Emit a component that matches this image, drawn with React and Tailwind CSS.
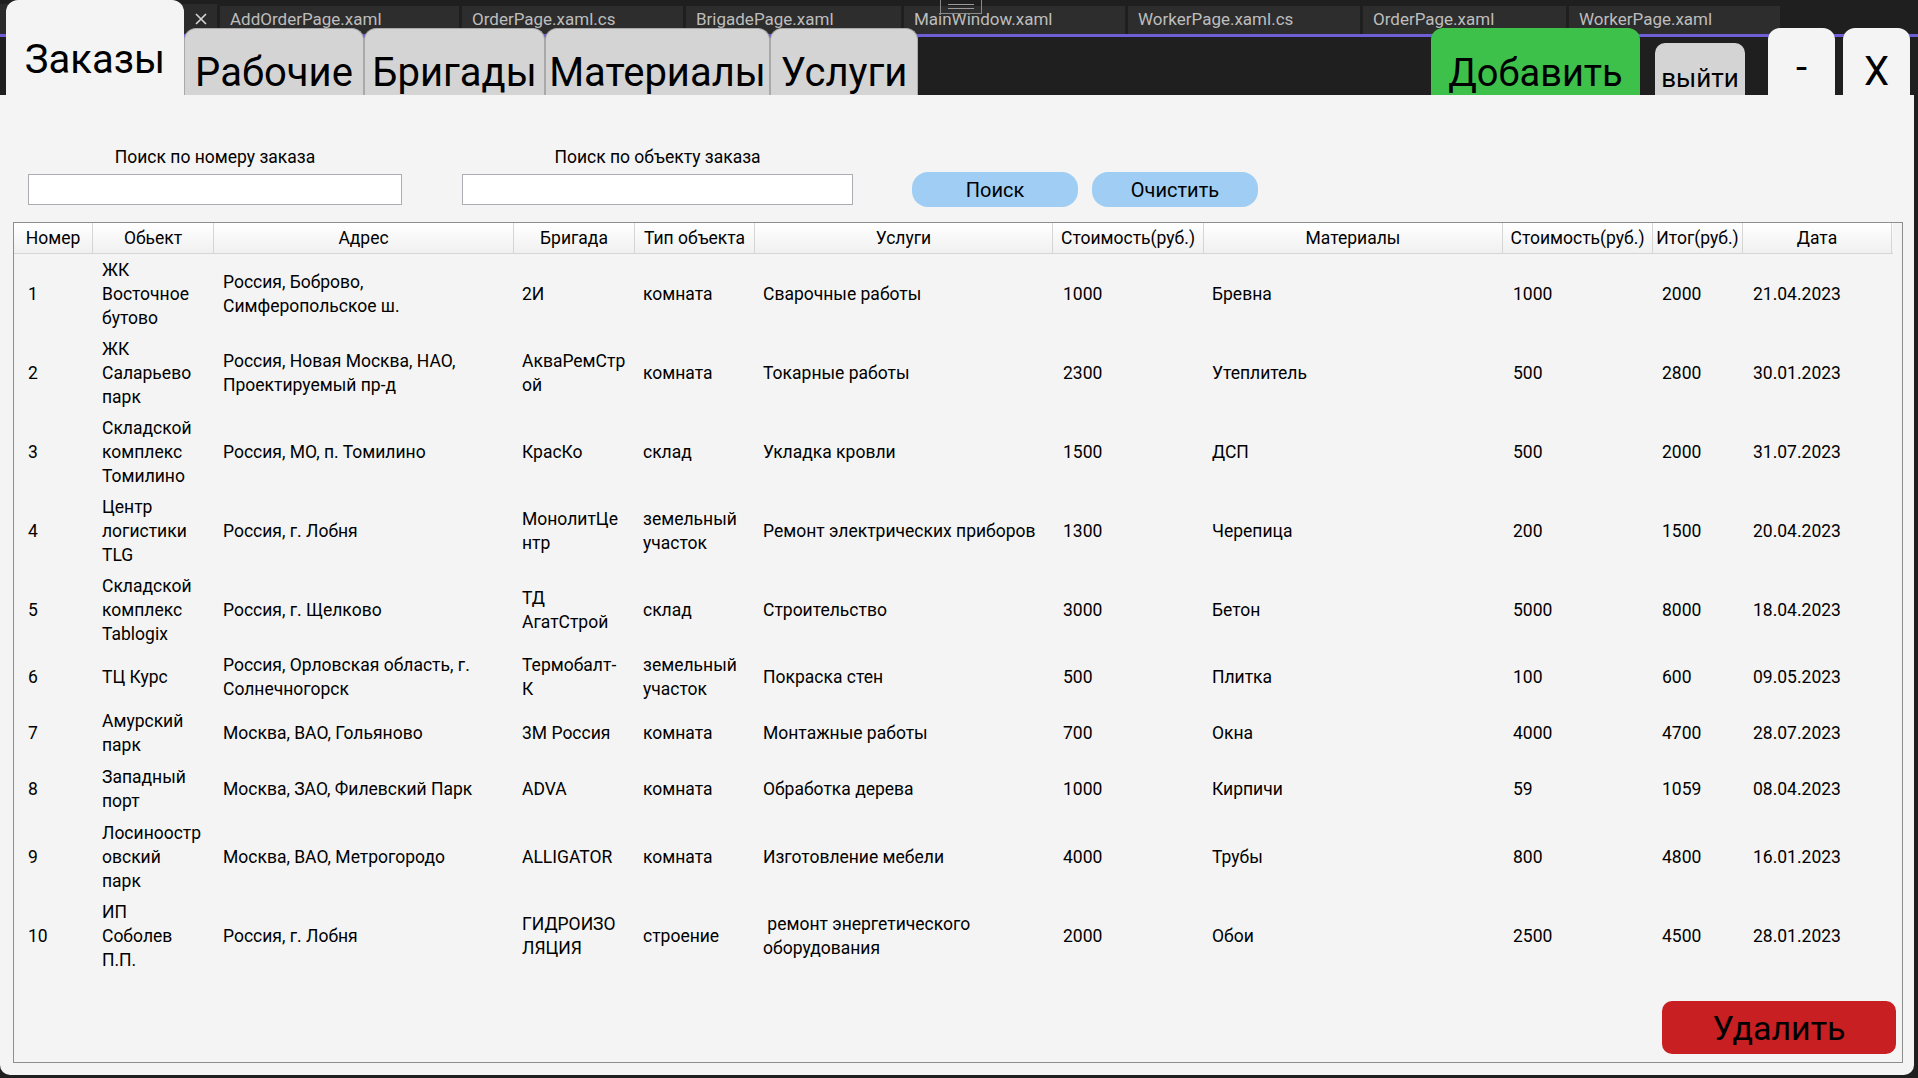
import React from "react";

const vsTabs = [
  { name: "AddOrderPage.xaml", w: "w-[239px]" },
  { name: "OrderPage.xaml.cs", w: "w-[221px]" },
  { name: "BrigadePage.xaml", w: "w-[215px]" },
  { name: "MainWindow.xaml", w: "w-[221px]" },
  { name: "WorkerPage.xaml.cs", w: "w-[232px]" },
  { name: "OrderPage.xaml", w: "w-[203px]" },
  { name: "WorkerPage.xaml", w: "w-[211px]" },
];

const appTabs = [
  { name: "Рабочие", w: "w-[180px]" },
  { name: "Бригады", w: "w-[181px]" },
  { name: "Материалы", w: "w-[225px]" },
  { name: "Услуги", w: "w-[148px]" },
];

const columns = [
  { title: "Номер", w: "w-[79px]", pad: "pl-[14px]" },
  { title: "Обьект", w: "w-[121px]", pad: "pl-[9px]" },
  { title: "Адрес", w: "w-[300px]", pad: "pl-[9px]" },
  { title: "Бригада", w: "w-[121px]", pad: "pl-[8px]" },
  { title: "Тип объекта", w: "w-[120px]", pad: "pl-[8px]" },
  { title: "Услуги", w: "w-[298px]", pad: "pl-[8px]" },
  { title: "Стоимость(руб.)", w: "w-[151px]", pad: "pl-[10px]" },
  { title: "Материалы", w: "w-[299px]", pad: "pl-[8px]" },
  { title: "Стоимость(руб.)", w: "w-[150px]", pad: "pl-[10px]" },
  { title: "Итог(руб.)", w: "w-[90px]", pad: "pl-[9px]" },
  { title: "Дата", w: "w-[149px]", pad: "pl-[10px]" },
];

// каждая ячейка - массив строк, как они переносятся в гриде
const orders = [
  [["1"], ["ЖК", "Восточное", "бутово"], ["Россия, Боброво,", "Симферопольское ш."], ["2И"], ["комната"], ["Сварочные работы"], ["1000"], ["Бревна"], ["1000"], ["2000"], ["21.04.2023"]],
  [["2"], ["ЖК", "Саларьево", "парк"], ["Россия, Новая Москва, НАО,", "Проектируемый пр-д"], ["АкваРемСтр", "ой"], ["комната"], ["Токарные работы"], ["2300"], ["Утеплитель"], ["500"], ["2800"], ["30.01.2023"]],
  [["3"], ["Складской", "комплекс", "Томилино"], ["Россия, МО, п. Томилино"], ["КрасКо"], ["склад"], ["Укладка кровли"], ["1500"], ["ДСП"], ["500"], ["2000"], ["31.07.2023"]],
  [["4"], ["Центр", "логистики", "TLG"], ["Россия, г. Лобня"], ["МонолитЦе", "нтр"], ["земельный", "участок"], ["Ремонт электрических приборов"], ["1300"], ["Черепица"], ["200"], ["1500"], ["20.04.2023"]],
  [["5"], ["Складской", "комплекс", "Tablogix"], ["Россия, г. Щелково"], ["ТД", "АгатСтрой"], ["склад"], ["Строительство"], ["3000"], ["Бетон"], ["5000"], ["8000"], ["18.04.2023"]],
  [["6"], ["ТЦ Курс"], ["Россия, Орловская область, г.", "Солнечногорск"], ["Термобалт-", "К"], ["земельный", "участок"], ["Покраска стен"], ["500"], ["Плитка"], ["100"], ["600"], ["09.05.2023"]],
  [["7"], ["Амурский", "парк"], ["Москва, ВАО, Гольяново"], ["3М Россия"], ["комната"], ["Монтажные работы"], ["700"], ["Окна"], ["4000"], ["4700"], ["28.07.2023"]],
  [["8"], ["Западный", "порт"], ["Москва, ЗАО, Филевский Парк"], ["ADVA"], ["комната"], ["Обработка дерева"], ["1000"], ["Кирпичи"], ["59"], ["1059"], ["08.04.2023"]],
  [["9"], ["Лосиноостр", "овский", "парк"], ["Москва, ВАО, Метрогородо"], ["ALLIGATOR"], ["комната"], ["Изготовление мебели"], ["4000"], ["Трубы"], ["800"], ["4800"], ["16.01.2023"]],
  [["10"], ["ИП", "Соболев", "П.П."], ["Россия, г. Лобня"], ["ГИДРОИЗО", "ЛЯЦИЯ"], ["строение"], [" ремонт энергетического", "оборудования"], ["2000"], ["Обои"], ["2500"], ["4500"], ["28.01.2023"]],
];

const App = () => {
  return (
    <div className="relative w-[1918px] h-[1078px] bg-[#1f1f1f] flex flex-col overflow-hidden font-['Roboto',sans-serif] text-black">
      {/* вкладки студии за окном */}
      <div className="absolute top-0 left-0 w-full h-[37px] border-b-[3px] border-[#6f5fd6]">
        <div className="flex items-end h-full">
          <div className="w-[217px] h-[30px] bg-[#2b2b2b] flex items-center justify-end pr-[9px]">
            <svg width="14" height="14" viewBox="0 0 14 14" stroke="#d6d6d6" strokeWidth="1.6">
              <path d="M2 2 L12 12 M12 2 L2 12" />
            </svg>
          </div>
          {vsTabs.map((t) => (
            <div
              key={t.name}
              className={`${t.w} h-[28px] ml-[3px] bg-[#2d2d2d] flex items-center pl-[10px] text-[17px] text-[#bdbdbd]`}
            >
              {t.name}
            </div>
          ))}
        </div>
        <div className="absolute top-[-1px] left-[940px] w-[42px] h-[15px] border border-[#8a8a8a] flex flex-col items-center justify-center gap-[3px]">
          <div className="w-[26px] h-px bg-[#9a9a9a]" />
          <div className="w-[26px] h-px bg-[#9a9a9a]" />
        </div>
      </div>

      {/* шапка окна */}
      <div className="relative h-[95px] shrink-0 flex items-end pl-[6px] pr-[8px]">
        <div className="w-[178px] h-[95px] bg-[#f4f4f4] rounded-t-[12px] flex justify-center pt-[39px] text-[40px] leading-[42px]">
          Заказы
        </div>
        {appTabs.map((t) => (
          <div
            key={t.name}
            className={`${t.w} h-[67px] bg-[#d4d4d4] rounded-t-[12px] border-x border-t border-[#a9a9a9] flex justify-center pt-[23px] text-[40px] leading-[42px] overflow-hidden`}
          >
            {t.name}
          </div>
        ))}
        <div className="flex-1" />
        <button className="w-[209px] h-[67px] bg-[#3dc14b] rounded-t-[12px] flex justify-center pt-[25px] text-[38px] leading-[40px]">
          Добавить
        </button>
        <button className="ml-[15px] w-[90px] h-[52px] bg-[#d4d4d4] rounded-t-[10px] flex justify-center pt-[20px] text-[26px] leading-[30px]">
          выйти
        </button>
        <button className="ml-[23px] w-[67px] h-[67px] bg-[#f4f4f4] rounded-t-[12px] flex justify-center pt-[20px] text-[40px] leading-[40px]">
          -
        </button>
        <button className="ml-[8px] w-[67px] h-[67px] bg-[#f4f4f4] rounded-t-[12px] flex justify-center pt-[24px] text-[40px] leading-[40px]">
          X
        </button>
      </div>

      {/* тело окна */}
      <div className="relative flex-1 mr-[4px] mb-[3px] bg-[#f4f4f4] rounded-b-[10px] flex flex-col">
        <div className="flex items-end pt-[50px] pl-[28px]">
          <div className="flex flex-col items-center gap-[5px]">
            <span className="text-[17.5px] leading-[24px]">Поиск по номеру заказа</span>
            <input className="w-[374px] h-[31px] bg-white border border-[#abadb3] outline-none px-1 text-[18px]" />
          </div>
          <div className="ml-[60px] flex flex-col items-center gap-[5px]">
            <span className="text-[17.5px] leading-[24px]">Поиск по объекту заказа</span>
            <input className="w-[391px] h-[31px] bg-white border border-[#abadb3] outline-none px-1 text-[18px]" />
          </div>
          <button className="ml-[59px] mb-[-2px] w-[166px] h-[35px] rounded-[16px] bg-[#9fcdf3] text-[20px]">
            Поиск
          </button>
          <button className="ml-[14px] mb-[-2px] w-[166px] h-[35px] rounded-[16px] bg-[#9fcdf3] text-[20px]">
            Очистить
          </button>
        </div>

        <div className="mt-[17px] ml-[13px] w-[1890px] h-[841px] border border-[#8e8e8e] flex flex-col">
          <div className="flex h-[31px] shrink-0 bg-gradient-to-b from-white to-[#f0f0f0] border-b border-[#d5d5d5] mr-[9px]">
            {columns.map((c, i) => (
              <div
                key={i}
                className={`${c.w} shrink-0 border-r border-[#d5d5d5] flex items-center justify-center text-[17.5px] whitespace-nowrap`}
              >
                {c.title}
              </div>
            ))}
          </div>
          {orders.map((row, r) => {
            const lines = Math.max(...row.map((cell) => cell.length));
            return (
              <div key={r} className={`flex shrink-0 ${lines === 3 ? "h-[79px]" : "h-[56px]"}`}>
                {row.map((cell, i) => (
                  <div
                    key={i}
                    className={`${columns[i].w} ${columns[i].pad} shrink-0 flex flex-col justify-center text-[17.5px] leading-[24px] whitespace-pre`}
                  >
                    {cell.map((line, k) => (
                      <span key={k}>{line}</span>
                    ))}
                  </div>
                ))}
              </div>
            );
          })}
        </div>

        <button className="absolute left-[1662px] top-[906px] w-[234px] h-[53px] rounded-[10px] bg-[#c71f22] text-[34px] leading-[40px]">
          Удалить
        </button>
      </div>
    </div>
  );
};

export default App;
